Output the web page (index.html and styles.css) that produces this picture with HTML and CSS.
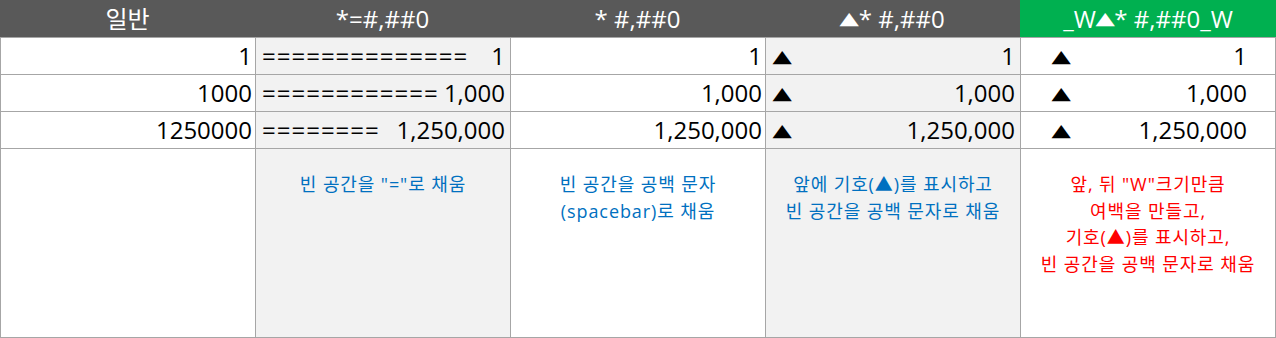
FILE: index.html
```html
<!DOCTYPE html>
<html lang="ko">
<head>
<meta charset="utf-8">
<link rel="stylesheet" href="styles.css">
</head>
<body>
<div class="sheet">
  <div class="head">
    <div class="hcell">일반</div>
    <div class="hcell">*=#,##0</div>
    <div class="hcell">* #,##0</div>
    <div class="hcell"><span class="tri">▲</span>* #,##0</div>
    <div class="hcell green">_W<span class="tri">▲</span>* #,##0_W</div>
  </div>
  <div class="grid">
    <div class="cell num">1</div>
    <div class="cell alt fill"><span class="eq">==============</span><span>1</span></div>
    <div class="cell num">1</div>
    <div class="cell alt split"><span class="tri">▲</span><span>1</span></div>
    <div class="cell split wide"><span class="tri">▲</span><span>1</span></div>

    <div class="cell num">1000</div>
    <div class="cell alt fill"><span class="eq">============</span><span>1,000</span></div>
    <div class="cell num">1,000</div>
    <div class="cell alt split"><span class="tri">▲</span><span>1,000</span></div>
    <div class="cell split wide"><span class="tri">▲</span><span>1,000</span></div>

    <div class="cell num">1250000</div>
    <div class="cell alt fill"><span class="eq">========</span><span>1,250,000</span></div>
    <div class="cell num">1,250,000</div>
    <div class="cell alt split"><span class="tri">▲</span><span>1,250,000</span></div>
    <div class="cell split wide"><span class="tri">▲</span><span>1,250,000</span></div>

    <div class="cell desc"></div>
    <div class="cell alt desc blue">빈 공간을 "="로 채움</div>
    <div class="cell desc blue">빈 공간을 공백 문자<br>(spacebar)로 채움</div>
    <div class="cell alt desc blue">앞에 기호(▲)를 표시하고<br>빈 공간을 공백 문자로 채움</div>
    <div class="cell desc red">앞, 뒤 "W"크기만큼<br>여백을 만들고,<br>기호(▲)를 표시하고,<br>빈 공간을 공백 문자로 채움</div>
  </div>
</div>
</body>
</html>
```
FILE: styles.css
```css
html, body {
  margin: 0;
  padding: 0;
  background: #ffffff;
}
.sheet {
  width: 1276px;
  font-family: "Open Sans", "Noto Sans CJK KR", sans-serif;
  color: #000000;
}
.head {
  display: grid;
  grid-template-columns: 255px 255px 255px 255px 256px;
  height: 37px;
  background: #595959;
}
.hcell {
  display: flex;
  align-items: center;
  justify-content: center;
  color: #ffffff;
  font-size: 24px;
  line-height: 37px;
}
.hcell.green {
  background: #00b050;
}
.grid {
  display: grid;
  grid-template-columns: repeat(5, 254px);
  grid-template-rows: 36px 36px 36px 188px;
  gap: 1px;
  padding: 1px;
  background: #a6a6a6;
}
.cell {
  background: #ffffff;
  font-size: 24px;
  line-height: 36px;
  display: flex;
  align-items: center;
  white-space: nowrap;
}
.cell.alt {
  background: #f2f2f2;
}
.num {
  justify-content: flex-end;
  padding-right: 3px;
}
.fill {
  justify-content: space-between;
  padding: 0 5px 0 6px;
}
.eq {
  letter-spacing: 1px;
}
.split {
  justify-content: space-between;
  padding: 0 5px 0 7px;
}
.split.wide {
  padding: 0 28px 0 31px;
}
.tri {
  font-family: "DejaVu Sans", sans-serif;
  display: inline-block;
  font-size: 24px;
  transform: scale(1.05, 0.72);
}
.desc {
  display: block;
  text-align: center;
  font-size: 18px;
  line-height: 26.5px;
  letter-spacing: 0.9px;
  padding-top: 22px;
  white-space: normal;
}
.blue {
  color: #0070c0;
}
.red {
  color: #ff0000;
}
```
